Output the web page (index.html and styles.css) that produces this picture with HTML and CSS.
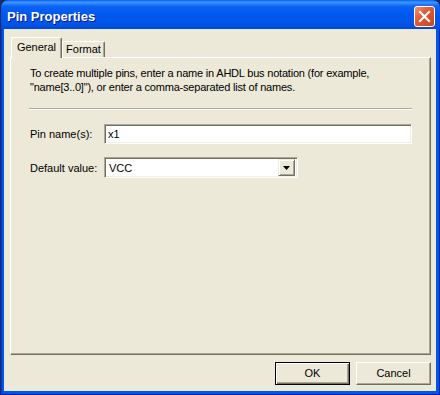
FILE: index.html
```html
<!DOCTYPE html>
<html>

<head>
    <meta charset="UTF-8">
    <title>Pin Properties</title>
    <link rel="stylesheet" href="styles.css">
</head>

<body>
    <div class="window">
        <div class="titlebar">
            <span class="title">Pin Properties</span>
            <span class="close">
                <svg width="13" height="13" viewBox="0 0 13 13">
                    <path d="M2 2 L11 11 M11 2 L2 11" stroke="white" stroke-width="2.2" stroke-linecap="square" />
                </svg>
            </span>
        </div>
        <div class="client">
            <div class="tabs">
                <div class="tab active">General</div>
                <div class="tab">Format</div>
            </div>
            <div class="panel">
                <p class="hint">To create multiple pins, enter a name in AHDL bus notation (for example,<br>"name[3..0]"), or enter a comma-separated list of names.</p>
                <div class="sep"></div>
                <div class="row">
                    <span class="label">Pin name(s):</span>
                    <div class="field wide">x1</div>
                </div>
                <div class="row second">
                    <span class="label">Default value:</span>
                    <div class="field combo">
                        <span class="value">VCC</span>
                        <span class="drop">
                            <svg width="7" height="4" viewBox="0 0 7 4">
                                <path d="M0 0 H7 L3.5 4 Z" fill="black" />
                            </svg>
                        </span>
                    </div>
                </div>
            </div>
            <div class="buttons">
                <span class="btn default">OK</span>
                <span class="btn">Cancel</span>
            </div>
        </div>
    </div>
</body>

</html>
```

FILE: styles.css
```css
* {
    box-sizing: border-box;
}

body {
    margin: 0;
    background-color: #1b2b5e;
    font-family: "Liberation Sans", Arial, sans-serif;
    font-size: 11px;
    color: black;
}

.window {
    width: 439px;
    height: 395px;
    margin-left: 1px;
    background-color: #0055ea;
    border-radius: 8px 8px 0 0;
    display: flex;
    flex-direction: column;
    box-shadow: inset 1px 0 #0831d9, inset -1px 0 #001ea0, inset 0 -1px #001ea0;
}

.titlebar {
    height: 29px;
    padding: 4px 5px 0 6px;
    display: flex;
    align-items: center;
    justify-content: space-between;
    border-radius: 8px 8px 0 0;
    background: linear-gradient(to bottom, #0a5fef 0%, #3d95ff 8%, #0a63f5 22%, #0058ee 50%, #0055e9 80%, #0049d8 100%);
}

.title {
    color: white;
    font-weight: bold;
    font-size: 13px;
    text-shadow: 1px 1px #0a1883;
}

.close {
    width: 21px;
    height: 21px;
    border: 1px solid white;
    border-radius: 3px;
    background: linear-gradient(135deg, #f39072 0%, #e35a35 40%, #cc4320 100%);
    display: flex;
    align-items: center;
    justify-content: center;
}

.client {
    flex: 1;
    margin: 0 4px 4px 3px;
    background-color: #ece9d8;
    padding: 8px 5px 6px 6px;
    display: flex;
    flex-direction: column;
}

.tabs {
    height: 20px;
    padding-left: 1px;
    display: flex;
    align-items: flex-end;
}

.tab {
    height: 16px;
    width: 43px;
    text-align: center;
    line-height: 15px;
    border-top: 1px solid white;
    border-left: 1px solid white;
    border-right: 1px solid #716f64;
    box-shadow: inset -1px 0 #aca899;
    border-radius: 2px 2px 0 0;
    background-color: #ece9d8;
}

.tab.active {
    height: 21px;
    width: 51px;
    line-height: 18px;
    margin-bottom: -1px;
    z-index: 1;
}

.panel {
    height: 298px;
    border-top: 1px solid white;
    border-left: 1px solid white;
    border-right: 1px solid #716f64;
    border-bottom: 1px solid #716f64;
    box-shadow: inset -1px -1px #aca899;
    padding: 8px 0 0 18px;
}

.hint {
    margin: 0 0 0 1px;
    line-height: 14px;
    letter-spacing: -0.2px;
}

.sep {
    width: 383px;
    height: 2px;
    margin-top: 14px;
    border-top: 1px solid #aca899;
    border-bottom: 1px solid white;
}

.row {
    display: flex;
    align-items: center;
    margin-top: 14px;
}

.row.second {
    margin-top: 13px;
}

.label {
    width: 75px;
    padding-left: 1px;
}

.field {
    height: 20px;
    background-color: white;
    border: 1px solid;
    border-color: #aca899 white white #aca899;
    box-shadow: inset 1px 1px #716f64, inset -1px -1px #f1efe2;
    padding-left: 3px;
    line-height: 18px;
}

.wide {
    width: 308px;
}

.combo {
    width: 194px;
    height: 21px;
    display: flex;
    align-items: center;
    justify-content: space-between;
    padding: 2px;
    padding-left: 4px;
}

.drop {
    width: 17px;
    height: 17px;
    background-color: #ece9d8;
    border: 1px solid;
    border-color: #f1efe2 #716f64 #716f64 #f1efe2;
    box-shadow: inset 1px 1px white, inset -1px -1px #aca899;
    display: flex;
    align-items: center;
    justify-content: center;
}

.buttons {
    margin-top: 7px;
    display: flex;
    justify-content: flex-end;
    gap: 6px;
}

.btn {
    width: 75px;
    height: 23px;
    line-height: 20px;
    text-align: center;
    background-color: #ece9d8;
    border: 1px solid;
    border-color: white #716f64 #716f64 white;
    box-shadow: inset -1px -1px #aca899;
}

.btn.default {
    border-color: black;
    box-shadow: inset 1px 1px white, inset -1px -1px #716f64, inset -2px -2px #aca899;
}
```
